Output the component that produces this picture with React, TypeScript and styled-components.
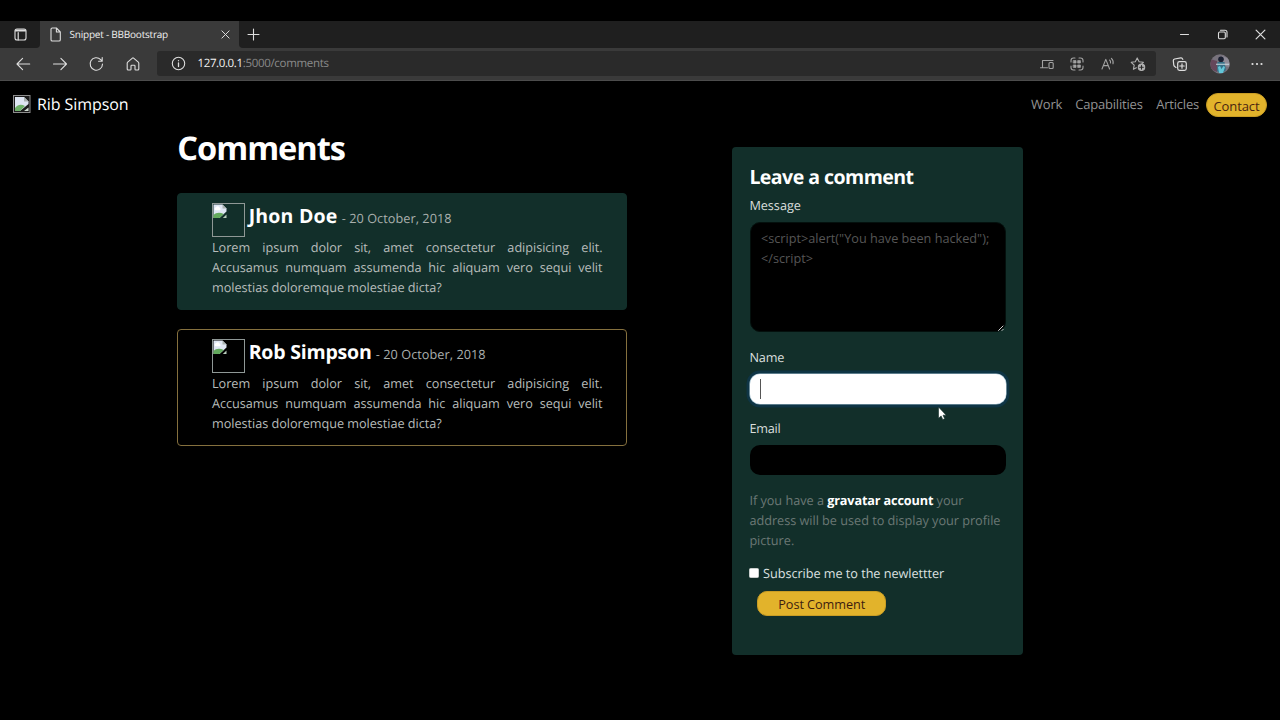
import React from 'react';
import styled, { createGlobalStyle } from 'styled-components';

const GlobalStyle = createGlobalStyle`
  *, *::before, *::after { box-sizing: border-box; }
  html, body { margin: 0; background: #000; }
  body {
    font-family: "Segoe UI", "Open Sans", "Noto Sans", sans-serif;
    font-size: 12.7px;
    line-height: 20px;
    color: #fff;
    text-rendering: geometricPrecision;
    overflow: hidden;
  }
  h1, h2, h3, p { margin: 0; }
`;

const Screen = styled.div`
  width: 1280px;
  height: 720px;
  padding-top: 21px;
  background: #000;
  display: flex;
  flex-direction: column;
`;

/* ---------- browser chrome ---------- */

const TabStrip = styled.div`
  height: 27px;
  flex: none;
  display: flex;
  background: #3a3a3a;
`;

const TabActions = styled.div`
  width: 40px;
  background: #1f1f1f;
  border-bottom-right-radius: 4px;
  display: flex;
  align-items: center;
  justify-content: center;
`;

const Tab = styled.div`
  width: 199px;
  padding: 0 9px 1px 9px;
  display: flex;
  align-items: center;
  background: #3a3a3a;
`;

const TabTitle = styled.span`
  flex: 1;
  margin-left: 7.5px;
  font-size: 10px;
  letter-spacing: -0.216px;
  color: #f0f0f0;
  white-space: nowrap;
`;

const StripRest = styled.div`
  flex: 1;
  background: #1f1f1f;
  border-bottom-left-radius: 4px;
  display: flex;
  align-items: center;
  padding: 0 14px 1px 8px;
`;

const WindowButtons = styled.div`
  margin-left: auto;
  display: flex;
  align-items: center;
  gap: 26px;
`;

const Toolbar = styled.div`
  height: 33px;
  flex: none;
  display: flex;
  align-items: center;
  background: #3a3a3a;
  border-bottom: 1px solid #4c4c4c;
  padding: 0 17px 1px 15px;
`;

const NavButtons = styled.div`
  display: flex;
  gap: 20.7px;
  width: 142px;
`;

const AddressBar = styled.div`
  width: 999px;
  height: 25px;
  border-radius: 3px;
  background: #2a2a2a;
  display: flex;
  align-items: center;
  padding: 0 9px 0 14px;
`;

const Url = styled.span`
  flex: 1;
  margin-left: 11.5px;
  padding-top: 1px;
  font-size: 11.5px;
  letter-spacing: -0.31px;
  color: #8b8b8b;
`;

const Host = styled.span`
  color: #f4f4f4;
  letter-spacing: -0.37px;
`;

const AddressIcons = styled.div`
  display: flex;
  align-items: center;
  gap: 14.3px;
`;

const ToolbarEnd = styled.div`
  flex: 1;
  display: flex;
  align-items: center;
  justify-content: space-between;
  padding-left: 16px;
`;

const Stroke = styled.svg<{ $c?: string; $w?: number }>`
  display: block;
  flex: none;
  fill: none;
  stroke: ${(p) => p.$c ?? '#dedede'};
  stroke-width: ${(p) => p.$w ?? 1.1};
  stroke-linecap: round;
  stroke-linejoin: round;
`;

/* ---------- page ---------- */

const Navbar = styled.nav`
  height: 46px;
  flex: none;
  display: flex;
  align-items: center;
  padding: 0 13px 1px;
`;

const Brand = styled.div`
  display: flex;
  align-items: center;
  gap: 6.5px;
  font-size: 16px;
  letter-spacing: -0.08px;
  margin-right: auto;
`;

const NavLink = styled.a<{ $gap: number }>`
  font-size: 13px;
  letter-spacing: -0.2px;
  color: #929292;
  margin-right: ${(p) => p.$gap}px;
`;

const ContactButton = styled.button`
  width: 61px;
  height: 24px;
  margin: 3px 0 0;
  padding: 1px 0 0;
  border: 1px solid #c99d24;
  border-radius: 12px;
  background: #e2b32b;
  color: #4a2410;
  font: inherit;
  font-size: 13px;
  letter-spacing: -0.1px;
`;

const Main = styled.main`
  display: flex;
  align-items: flex-start;
  padding-left: 177.3px;
`;

const Comments = styled.section`
  width: 450px;
  margin-right: 104.7px;
`;

const Title = styled.h1`
  font-size: 32.6px;
  line-height: 40px;
  padding-top: 1px;
  letter-spacing: -1.03px;
  font-weight: 700;
  margin-bottom: 25.4px;
`;

const Card = styled.article<{ $outlined?: boolean }>`
  height: ${(p) => (p.$outlined ? 117 : 116.5)}px;
  padding: 9px 23px 0 33.7px;
  margin-bottom: 19.5px;
  border: 1px solid ${(p) => (p.$outlined ? '#85703e' : '#122f2a')};
  border-radius: 4px;
  background: ${(p) => (p.$outlined ? '#000' : '#122f2a')};
`;

const CardHead = styled.div<{ $height: number }>`
  display: flex;
  align-items: flex-start;
  height: ${(p) => p.$height}px;
`;

const MissingPicture = styled.div`
  width: 33.5px;
  height: 33.5px;
  border: 1px solid #8f9896;
  margin-right: 3.2px;
`;

const Author = styled.h2<{ $ls: number }>`
  font-size: 19.5px;
  line-height: 26px;
  font-weight: 700;
  letter-spacing: ${(p) => p.$ls}px;
`;

const DateText = styled.span`
  line-height: 31px;
  margin-left: 4.2px;
  color: #a9afad;
  letter-spacing: 0.05px;
`;

const Body = styled.p`
  width: 390.5px;
  color: #b7bcba;
  text-align: justify;
  letter-spacing: -0.04px;
`;

const Panel = styled.form`
  width: 291px;
  height: 508.5px;
  margin-top: 19.7px;
  padding: 15px 17.3px 0 17.4px;
  border-radius: 4px;
  background: #122f2a;
`;

const PanelTitle = styled.h2`
  font-size: 19.5px;
  line-height: 30px;
  letter-spacing: -0.53px;
  font-weight: 700;
`;

const Label = styled.label<{ $top: number; $ls?: number }>`
  display: block;
  margin-top: ${(p) => p.$top}px;
  color: #d9dedc;
  letter-spacing: ${(p) => p.$ls ?? -0.03}px;
`;

const AreaWrap = styled.div`
  position: relative;
  margin: 7.3px 0 0 0.6px;
  height: 110.5px;
`;

const Area = styled.textarea`
  display: block;
  width: 100%;
  height: 100%;
  padding: 5px 10px;
  border: 1px solid #04100d;
  border-radius: 10px;
  background: #000;
  font: inherit;
  color: #fff;
  resize: none;
  outline: none;
  overflow: hidden;
  &::placeholder { color: #565656; opacity: 1; }
`;

const Grip = styled(Stroke)`
  position: absolute;
  right: 1px;
  bottom: 0;
`;

const Field = styled.div<{ $focused?: boolean }>`
  height: 30.5px;
  margin: 7px 0 0 0.6px;
  border-radius: 10px;
  padding: 5px 10px;
  background: ${(p) => (p.$focused ? '#fff' : '#000')};
  box-shadow: ${(p) => (p.$focused ? '0 0 0 .6px #a9c4d2, 0 0 0 3.4px #0f3545' : 'none')};
`;

const Caret = styled.div`
  width: 1px;
  height: 20px;
  background: #555;
`;

const Note = styled.p`
  margin-top: 14.5px;
  color: #6b7875;
  letter-spacing: -0.02px;
  white-space: nowrap;
  strong { color: #fff; font-weight: 700; letter-spacing: -0.15px; }
`;

const Subscribe = styled.label`
  display: flex;
  align-items: center;
  margin-top: 13.3px;
  color: #dde1e0;
  letter-spacing: -0.045px;
`;

const Box = styled.span`
  width: 10px;
  height: 10px;
  margin: 0 3.7px 1px 0;
  border: 1px solid #c9cecc;
  border-radius: 1.5px;
  background: #fff;
`;

const PostButton = styled.button`
  display: block;
  width: 129px;
  height: 25.5px;
  margin: 7.5px 0 0 7.9px;
  padding: 1px 0 0;
  border: 1px solid #c99d24;
  border-radius: 10px;
  background: #e2b32b;
  color: #3d1d10;
  font: inherit;
  letter-spacing: -0.05px;
`;

const Pointer = styled.svg`
  position: absolute;
  left: 937px;
  top: 406px;
`;

const Picture = styled.svg`
  display: block;
`;

const BrokenImage = () => (
  <Picture width="15" height="15" viewBox="0 0 15 15">
    <path d="M.5 .5H9.5L13.5 4.5V7.5L6.5 14H.5Z" fill="#dfe6f3" />
    <path d="M2.5 6.3a1.6 1.6 0 0 1 .3-3 2.2 2.2 0 0 1 4 .6 1.3 1.3 0 0 1 0 2.4Z" fill="#fff" />
    <path d="M.5 14V11C3 8.5 6.5 7.8 10.8 10L6.5 14Z" fill="#63a95d" />
    <path d="M9.5 .5V4.5H13.5Z" fill="#a9b2b0" />
    <path d="M9.8 14L13.5 10.6V14Z" fill="#b9cdbd" />
  </Picture>
);

const BrandImage = () => (
  <svg width="17.5" height="18" viewBox="0 0 17.5 18">
    <rect x=".5" y=".5" width="16.5" height="17" fill="#1b1b1b" stroke="#8d8d8d" />
    <path d="M2 2H11L15.5 6.5V9L7 16H2Z" fill="#dfe6f3" />
    <path d="M2 16V13C5 9.5 8 9 12 11L7 16Z" fill="#6fb169" />
    <path d="M11 2V6.5H15.5Z" fill="#a9b2b0" />
    <path d="M11 16L15.5 12.5V16Z" fill="#d3e0d4" />
  </svg>
);

const CloseIcon = ({ size }: { size: number }) => (
  <Stroke width={size} height={size} viewBox="0 0 10 10">
    <path d="M1 1L9 9M9 1L1 9" />
  </Stroke>
);

type CommentProps = { name: string; ls: number; outlined?: boolean };

const Comment = ({ name, ls, outlined }: CommentProps) => (
  <Card $outlined={outlined}>
    <CardHead $height={outlined ? 34 : 33.2}>
      <MissingPicture><BrokenImage /></MissingPicture>
      <Author $ls={ls}>{name}</Author>
      <DateText>- 20 October, 2018</DateText>
    </CardHead>
    <Body>
      Lorem ipsum dolor sit, amet consectetur adipisicing elit. Accusamus numquam
      assumenda hic aliquam vero sequi velit molestias doloremque molestiae dicta?
    </Body>
  </Card>
);

const Chrome = () => (
  <>
    <TabStrip>
      <TabActions>
        <Stroke width="13" height="13" viewBox="0 0 13 13">
          <rect x="1" y="1" width="11" height="11" rx="2" />
          <path d="M1.5 2.8H11.5M4.2 4.5V12" strokeWidth="1.2" />
          <path d="M2 2.2H11" strokeWidth="1.6" />
        </Stroke>
      </TabActions>
      <Tab>
        <Stroke width="13" height="15" viewBox="0 0 13 15">
          <path d="M2 2.3Q2 1 3.3 1H7.4L11.3 5V12.7Q11.3 14 10 14H3.3Q2 14 2 12.7ZM7.4 1V5H11.3" />
        </Stroke>
        <TabTitle>Snippet - BBBootstrap</TabTitle>
        <CloseIcon size={9} />
      </Tab>
      <StripRest>
        <Stroke width="13" height="13" viewBox="0 0 13 13">
          <path d="M6.5 1V12M1 6.5H12" />
        </Stroke>
        <WindowButtons>
          <Stroke width="11" height="10" viewBox="0 0 11 10"><path d="M1.5 5.5H9.5" /></Stroke>
          <Stroke width="13" height="11" viewBox="0 0 13 11">
            <rect x="2.5" y="3" width="6.8" height="6.8" rx="1.2" />
            <path d="M4.5 1.2H9Q11 1.2 11 3.2V8" />
          </Stroke>
          <CloseIcon size={11} />
        </WindowButtons>
      </StripRest>
    </TabStrip>
    <Toolbar>
      <NavButtons>
        <Stroke width="16" height="16" viewBox="0 0 16 16"><path d="M14.7 8H2M7.6 2.4L2 8L7.6 13.6" /></Stroke>
        <Stroke width="16" height="16" viewBox="0 0 16 16"><path d="M1.5 8H14.5M8.9 2.4L14.5 8L8.9 13.6" /></Stroke>
        <Stroke width="16" height="16" viewBox="0 0 16 16">
          <path d="M14.5 8A6.2 6.2 0 1 1 12.7 3.6L14 5M14.2 1.6V5.2H10.6" />
        </Stroke>
        <Stroke width="16" height="16" viewBox="0 0 16 16">
          <path d="M2.2 7.2Q2.2 6.6 2.7 6.1L7.4 2.1Q8 1.6 8.6 2.1L13.3 6.1Q13.8 6.6 13.8 7.2V13Q13.8 14 12.8 14H10.8Q10 14 10 13.2V10Q10 9.2 9.2 9.2H6.8Q6 9.2 6 10V13.2Q6 14 5.2 14H3.2Q2.2 14 2.2 13Z" />
        </Stroke>
      </NavButtons>
      <AddressBar>
        <Stroke width="15" height="15" viewBox="0 0 15 15">
          <circle cx="7.5" cy="7.5" r="6.2" />
          <path d="M7.5 7V10.5M7.5 4.6V4.7" strokeWidth="1.3" />
        </Stroke>
        <Url><Host>127.0.0.1</Host>:5000/comments</Url>
        <AddressIcons>
          <Stroke $c="#a2a2a2" width="16" height="14" viewBox="0 0 16 14">
            <path d="M3.5 10.5V3.5H14M1.5 10.8H8.5" />
            <rect x="10" y="5.5" width="4.2" height="6" rx="1" />
          </Stroke>
          <Stroke $c="#a2a2a2" width="16" height="16" viewBox="0 0 16 16">
            <path d="M2 6V4.5Q2 2 4.5 2H6M10 2H11.5Q14 2 14 4.5V6M14 10V11.5Q14 14 11.5 14H10M6 14H4.5Q2 14 2 11.5V10" />
            <g fill="#a2a2a2" strokeWidth=".8">
              <rect x="4.6" y="4.6" width="2.4" height="2.4" />
              <rect x="9" y="4.6" width="2.4" height="2.4" />
              <rect x="4.6" y="9" width="2.4" height="2.4" />
              <rect x="9" y="9" width="2.4" height="2.4" />
            </g>
          </Stroke>
          <Stroke $c="#a2a2a2" width="16" height="16" viewBox="0 0 16 16">
            <path d="M2 13L5.8 3.4L9.6 13M3.4 9.6H8.2M9.6 4Q10.9 5.2 10.5 7M11.4 2.3Q13.8 4.6 13 7.8" />
          </Stroke>
          <Stroke $c="#b0b0b0" width="17" height="16" viewBox="0 0 17 16">
            <path d="M6.3 11.7L3.4 13.3L4.2 9.2L1.2 6.3L5.3 5.7L7.2 1.9L9.1 5.7L13.4 6.3L12 7.5" />
            <circle cx="11.5" cy="11.3" r="3.2" fill="#b0b0b0" />
            <path d="M11.5 9.5V13.1M9.7 11.3H13.3" stroke="#2a2a2a" />
          </Stroke>
        </AddressIcons>
      </AddressBar>
      <ToolbarEnd>
        <Stroke $w={1.2} width="16" height="16" viewBox="0 0 16 16">
          <rect x="5.7" y="5.7" width="8.6" height="8.6" rx="1.8" />
          <path d="M10 7.8V12.2M7.8 10H12.2M4 11.4L3 10.8Q2 10.2 1.8 9.2L1.3 4.8Q1.2 3.4 2.6 3L8.8 1.8Q10.2 1.6 10.8 3.4" />
        </Stroke>
        <svg width="20" height="20" viewBox="0 0 20 20">
          <defs><clipPath id="avatar"><circle cx="10" cy="10" r="9.7" /></clipPath></defs>
          <g clipPath="url(#avatar)">
            <rect width="20" height="20" fill="#77727c" />
            <path d="M0 5L7 7V18L0 15Z" fill="#65475b" />
            <path d="M12 2L20 5V13L14 12Z" fill="#8f8b97" />
            <circle cx="11" cy="5.3" r="2.8" fill="#1b2032" />
            <path d="M7.5 8H14.5L16 16L11 20L7 17Z" fill="#366f86" />
            <path d="M8 13L10 12L11.5 15L13.5 12L15 13L13 19H9Z" fill="#63c6d8" />
            <path d="M6 10.2H19" stroke="#c9d8df" strokeWidth="1.1" />
          </g>
        </svg>
        <svg width="12" height="4" viewBox="0 0 12 4" fill="#e4e4e4">
          <circle cx="1.5" cy="2" r="1.1" /><circle cx="6" cy="2" r="1.1" /><circle cx="10.5" cy="2" r="1.1" />
        </svg>
      </ToolbarEnd>
    </Toolbar>
  </>
);

export default function App() {
  return (
    <Screen>
      <GlobalStyle />
      <Chrome />
      <Navbar>
        <Brand><BrandImage />Rib Simpson</Brand>
        <NavLink $gap={13}>Work</NavLink>
        <NavLink $gap={13.5}>Capabilities</NavLink>
        <NavLink $gap={7}>Articles</NavLink>
        <ContactButton>Contact</ContactButton>
      </Navbar>
      <Main>
        <Comments>
          <Title>Comments</Title>
          <Comment name="Jhon Doe" ls={0.2} />
          <Comment name="Rob Simpson" ls={-0.2} outlined />
        </Comments>
        <Panel>
          <PanelTitle>Leave a comment</PanelTitle>
          <Label $top={3}>Message</Label>
          <AreaWrap>
            <Area placeholder={'<script>alert("You have been hacked");\n</script>'} />
            <Grip $c="#d5d5d5" $w={1} width="8" height="8" viewBox="0 0 8 8">
              <path d="M1.5 6.5L6 2M5 6.5L6.2 5.3" />
            </Grip>
          </AreaWrap>
          <Label $top={14.5} $ls={-0.12}>Name</Label>
          <Field $focused><Caret /></Field>
          <Label $top={13.5} $ls={-0.25}>Email</Label>
          <Field />
          <Note>
            If you have a <strong>gravatar account</strong> your<br />
            address will be used to display your profile<br />
            picture.
          </Note>
          <Subscribe><Box />Subscribe me to the newlettter</Subscribe>
          <PostButton type="button">Post Comment</PostButton>
        </Panel>
      </Main>
      <Pointer width="10" height="16" viewBox="0 0 10 16">
        <path d="M1.5 1V12.3L4.1 9.9L5.8 13.6L7.7 12.7L6 9.2H9.2Z" fill="#fff" stroke="#122f2a" strokeWidth=".6" />
      </Pointer>
    </Screen>
  );
}
